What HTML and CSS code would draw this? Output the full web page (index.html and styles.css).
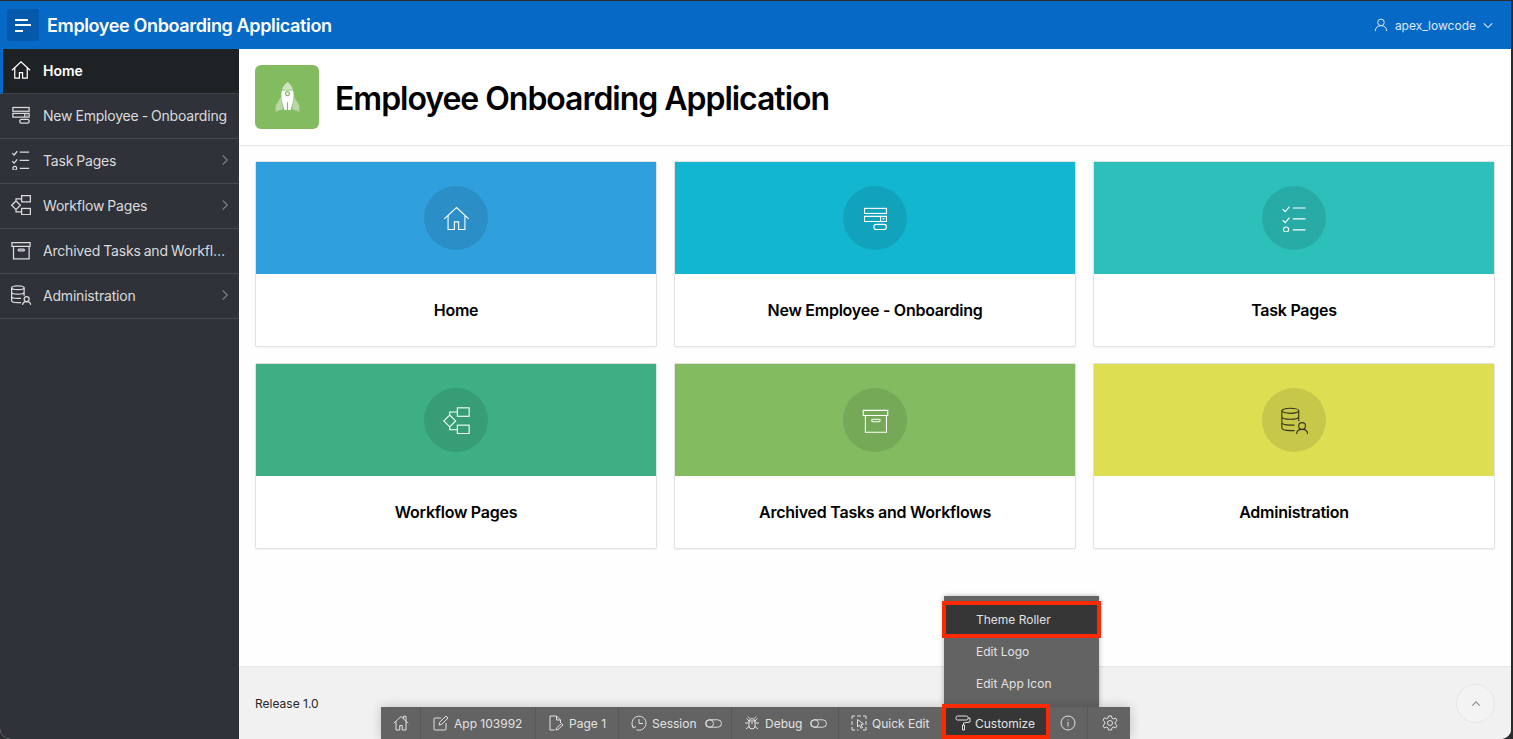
FILE: index.html
```html
<!DOCTYPE html>
<html lang="en">
<head>
    <meta charset="UTF-8">
    <meta name="viewport" content="width=device-width, initial-scale=1.0">
    <title>Employee Onboarding Application</title>
    <link rel="stylesheet" href="styles.css">
</head>
<body>
    <svg class="icon-defs" aria-hidden="true">
        <symbol id="i-home" viewBox="0 0 32 32">
            <path d="M1.500 16.500 16 3l14.500 13.500M6 12.500V29h7.500v-9h5v9H26V12.500"/>
        </symbol>
        <symbol id="i-home-chimney" viewBox="0 0 32 32">
            <path d="M1.500 16.500 16 3l14.500 13.500M6 12.500V30h7.500v-9h5v9H26V12.500M21 7.500V2.500h5V12"/>
        </symbol>
        <symbol id="i-form" viewBox="0 0 32 32">
            <rect x="3" y="4" width="26" height="6"/>
            <path d="M3 13.500h26v6H3zM22 13.500v6"/>
            <path class="solid" d="M23.800 15.700h3.400l-1.700 2z"/>
            <rect x="14" y="23" width="15" height="6" rx="3"/>
        </symbol>
        <symbol id="i-tasks" viewBox="0 0 32 32">
            <path d="M2 5l3 3 5-6M2 18l3 3 5-6M14 3.500h15M14 16.500h15M14 29.500h15"/>
            <circle cx="6" cy="29" r="3"/>
        </symbol>
        <symbol id="i-flow" viewBox="0 0 32 32">
            <path d="M1 16.500 8 9.500 15 16.500 8 23.500zM8 9.500V6h9M8 23.500V27h9"/>
            <rect x="17" y="1" width="14" height="10"/>
            <rect x="17" y="21.500" width="14" height="10"/>
        </symbol>
        <symbol id="i-archive" viewBox="0 0 32 32">
            <path d="M1.500 4h29v6h-29zM4 10v20h25V10"/>
            <rect x="11.500" y="14.500" width="10" height="3" rx="1.500"/>
        </symbol>
        <symbol id="i-data" viewBox="0 0 32 32">
            <ellipse cx="11" cy="4.500" rx="10" ry="3"/>
            <path d="M1 4.500V25c0 2 4 3 10 3h5M21 4.500V17M1 11.500c0 2 4 3 10 3s10-1 10-3M1 18.500c0 2 4 3 10 3h5"/>
            <circle cx="25" cy="22.500" r="4"/>
            <path d="M18.500 32c0-3.500 2.500-5.500 6.500-5.500s6.500 2 6.500 5.500"/>
        </symbol>
        <symbol id="i-chevron" viewBox="0 0 32 32">
            <path d="M10 4l12 12-12 12"/>
        </symbol>
        <symbol id="i-user" viewBox="0 0 32 32">
            <circle cx="16" cy="10" r="7.500"/>
            <path d="M3 30c0-8 5-12.500 13-12.500S29 22 29 30"/>
        </symbol>
        <symbol id="i-edit" viewBox="0 0 32 32">
            <path d="M26 16v12a2 2 0 0 1-2 2H4a2 2 0 0 1-2-2V8a2 2 0 0 1 2-2h12M12 20l1.500-6L26 2l4 4-12.500 12.500z"/>
        </symbol>
        <symbol id="i-page" viewBox="0 0 32 32">
            <path d="M13 30H4V2h13l8 8v6M17 2v8h8M16 30l1-4 10-9 3 3-10 9z"/>
        </symbol>
        <symbol id="i-session" viewBox="0 0 32 32">
            <path d="M5 25a14 14 0 1 1 6 4.500M16 8v9h8M2 21l3 5 5-3"/>
        </symbol>
        <symbol id="i-toggle" viewBox="0 0 32 16">
            <rect x="1" y="1" width="30" height="14" rx="7"/>
            <circle cx="9" cy="8" r="7"/>
        </symbol>
        <symbol id="i-bug" viewBox="0 0 32 32">
            <path d="M10 12h12v10a6 6 0 0 1-12 0zM11 12a5 5 0 0 1 10 0M16 14v4M10 16H2M22 16h8M10 23l-6 5M22 23l6 5M10 12 5 7M22 12l5-5M11 7 8 3M21 7l3-4"/>
        </symbol>
        <symbol id="i-quick" viewBox="0 0 32 32">
            <path d="M2 8V2h6M12 2h8M24 2h6v6M30 12v8M30 24v6h-6M2 12v8M2 24v6h6M12 30h3M13 9l12 9-5 1 3 6-3 1.500-3-6-4 3z"/>
        </symbol>
        <symbol id="i-roller" viewBox="0 0 32 32">
            <rect x="2" y="2" width="24" height="8" rx="3"/>
            <path d="M26 6h4v8l-13 2v4M15 20h4v10h-4z"/>
        </symbol>
        <symbol id="i-info" viewBox="0 0 32 32">
            <circle cx="16" cy="16" r="14"/>
            <path d="M16 14v9M16 9v2"/>
        </symbol>
        <symbol id="i-gear" viewBox="0 0 32 32">
            <circle cx="16" cy="16" r="5"/>
            <path d="M13 2h6l1 4.500 3 1.500 4-2 3 5-3.500 3v4l3.500 3-3 5-4-2-3 1.500-1 4.500h-6l-1-4.500-3-1.500-4 2-3-5 3.500-3v-4L2 10.500l3-5 4 2 3-1.500z"/>
        </symbol>
    </svg>

    <div class="window">
        <header class="topbar">
            <div class="topbar-left">
                <button class="menu-btn" aria-label="Main Navigation">
                    <span class="bar bar-long"></span>
                    <span class="bar bar-full"></span>
                    <span class="bar bar-short"></span>
                </button>
                <span class="app-name">Employee Onboarding Application</span>
            </div>
            <div class="user-menu">
                <svg class="icon icon-user"><use href="#i-user"/></svg>
                <span>apex_lowcode</span>
                <svg class="icon icon-caret" viewBox="0 0 12 8"><path d="M1 1.500l5 5 5-5"/></svg>
            </div>
        </header>

        <div class="body-row">
            <nav class="sidebar">
                <a class="nav-item is-current"><svg class="icon nav-icon"><use href="#i-home"/></svg><span class="nav-label">Home</span></a>
                <a class="nav-item"><svg class="icon nav-icon"><use href="#i-form"/></svg><span class="nav-label">New Employee - Onboarding</span></a>
                <a class="nav-item"><svg class="icon nav-icon"><use href="#i-tasks"/></svg><span class="nav-label">Task Pages</span><svg class="icon nav-arrow"><use href="#i-chevron"/></svg></a>
                <a class="nav-item"><svg class="icon nav-icon"><use href="#i-flow"/></svg><span class="nav-label">Workflow Pages</span><svg class="icon nav-arrow"><use href="#i-chevron"/></svg></a>
                <a class="nav-item"><svg class="icon nav-icon"><use href="#i-archive"/></svg><span class="nav-label">Archived Tasks and Workflows</span></a>
                <a class="nav-item"><svg class="icon nav-icon"><use href="#i-data"/></svg><span class="nav-label">Administration</span><svg class="icon nav-arrow"><use href="#i-chevron"/></svg></a>
            </nav>

            <main class="content">
                <section class="hero">
                    <div class="hero-icon">
                        <svg viewBox="0 0 32 42" width="25" height="33">
                            <path class="fin" d="M8 20 1 31v8l9-3zM24 20l7 11v8l-9-3z"/>
                            <path class="nose" d="M16 1c-3 2-6 6-7 10h14c-1-4-4-8-7-10z"/>
                            <path class="rocket-body" d="M9 12h14c1 3 1 6 .500 10-.500 5-2 10-3.500 15h-8c-1.500-5-3-10-3.500-15-.500-4-.500-7 .500-10z"/>
                            <circle class="port" cx="16" cy="16" r="2.500"/>
                            <path class="port" d="M16 27v10"/>
                        </svg>
                    </div>
                    <h1>Employee Onboarding Application</h1>
                </section>

                <section class="cards">
                    <a class="card">
                        <div class="card-top c-blue"><span class="card-badge"><svg class="icon"><use href="#i-home"/></svg></span></div>
                        <h3>Home</h3>
                    </a>
                    <a class="card">
                        <div class="card-top c-cyan"><span class="card-badge"><svg class="icon"><use href="#i-form"/></svg></span></div>
                        <h3>New Employee - Onboarding</h3>
                    </a>
                    <a class="card">
                        <div class="card-top c-teal"><span class="card-badge"><svg class="icon"><use href="#i-tasks"/></svg></span></div>
                        <h3>Task Pages</h3>
                    </a>
                    <a class="card">
                        <div class="card-top c-green"><span class="card-badge"><svg class="icon"><use href="#i-flow"/></svg></span></div>
                        <h3>Workflow Pages</h3>
                    </a>
                    <a class="card">
                        <div class="card-top c-lime"><span class="card-badge"><svg class="icon"><use href="#i-archive"/></svg></span></div>
                        <h3>Archived Tasks and Workflows</h3>
                    </a>
                    <a class="card">
                        <div class="card-top c-yellow"><span class="card-badge dark"><svg class="icon"><use href="#i-data"/></svg></span></div>
                        <h3>Administration</h3>
                    </a>
                </section>

                <footer class="footer">
                    <span>Release 1.0</span>
                    <button class="to-top" aria-label="Top"><svg class="icon" viewBox="0 0 12 8"><path d="M1.500 6.500 6 2l4.500 4.500"/></svg></button>
                </footer>
            </main>
        </div>

        <!-- developer toolbar floats over the footer -->
        <div class="dev-menu">
            <a class="dev-menu-item is-marked">Theme Roller</a>
            <a class="dev-menu-item">Edit Logo</a>
            <a class="dev-menu-item">Edit App Icon</a>
        </div>
        <div class="dev-bar">
            <a class="dev-item only-icon"><svg class="icon"><use href="#i-home-chimney"/></svg></a>
            <a class="dev-item w-app"><svg class="icon"><use href="#i-edit"/></svg>App 103992</a>
            <a class="dev-item w-page"><svg class="icon"><use href="#i-page"/></svg>Page 1</a>
            <a class="dev-item w-session"><svg class="icon"><use href="#i-session"/></svg>Session<svg class="icon toggle"><use href="#i-toggle"/></svg></a>
            <a class="dev-item w-debug"><svg class="icon"><use href="#i-bug"/></svg>Debug<svg class="icon toggle"><use href="#i-toggle"/></svg></a>
            <a class="dev-item w-quick"><svg class="icon"><use href="#i-quick"/></svg>Quick Edit</a>
            <a class="dev-item w-custom is-marked"><svg class="icon"><use href="#i-roller"/></svg>Customize</a>
            <a class="dev-item only-icon"><svg class="icon"><use href="#i-info"/></svg></a>
            <a class="dev-item only-icon"><svg class="icon"><use href="#i-gear"/></svg></a>
        </div>
    </div>
</body>
</html>
```

FILE: styles.css
```css
* {
    box-sizing: border-box;
}
html, body {
    height: 100%;
}
body {
    margin: 0;
    overflow: hidden;
    background: #2b2b2d;
    font-family: Inter, "Liberation Sans", sans-serif;
    color: #000;
}
.icon-defs {
    display: none;
}
.icon {
    display: block;
    fill: none;
    stroke: currentColor;
    stroke-width: 2;
    flex: none;
}
.solid {
    fill: currentColor;
    stroke: none;
}
.window {
    position: relative;
    width: 1511px;
    height: 738px;
    margin-top: 1px;
    display: flex;
    flex-direction: column;
    overflow: hidden;
    border-radius: 0 0 10px 10px;
    background: #fefefe;
}

/* top bar */
.topbar {
    height: 48px;
    flex: none;
    display: flex;
    justify-content: space-between;
    align-items: center;
    padding: 0 18px 0 7px;
    background: #0669c6;
    color: #fff;
}
.topbar-left {
    display: flex;
    align-items: center;
    gap: 8px;
}
.menu-btn {
    width: 32px;
    height: 32px;
    padding: 0 0 0 8px;
    border: none;
    border-radius: 2px;
    background: #0559ab;
    display: flex;
    flex-direction: column;
    justify-content: center;
    gap: 3.500px;
}
.bar {
    display: block;
    height: 2px;
    background: #fff;
}
.bar-long {
    width: 13px;
}
.bar-full {
    width: 16px;
}
.bar-short {
    width: 8px;
}
.app-name {
    font-size: 18px;
    font-weight: 600;
    letter-spacing: -.36px;
}
.user-menu {
    display: flex;
    align-items: center;
    font-size: 12px;
    color: #dfeafa;
}
.icon-user {
    width: 14px;
    height: 14px;
    margin-right: 7px;
    stroke-width: 2.200;
}
.icon-caret {
    width: 10px;
    height: 7px;
    margin-left: 7px;
    stroke-width: 1.300;
}

/* side navigation */
.body-row {
    flex: 1;
    display: flex;
    min-height: 0;
}
.sidebar {
    width: 239px;
    flex: none;
    background: #2f3339;
    color: #dadbdc;
}
.nav-item {
    height: 45px;
    display: flex;
    align-items: center;
    padding: 0 11px 2px 11px;
    border-bottom: 1px solid #464a4f;
    font-size: 14px;
    letter-spacing: -.2px;
    word-spacing: -.6px;
}
.nav-item.is-current {
    padding-left: 8px;
    border-left: 3px solid #0669c6;
    border-bottom-color: #3f4347;
    background: #1f2224;
    color: #fff;
    font-weight: 600;
    letter-spacing: 0;
}
.nav-icon {
    width: 20px;
    height: 20px;
    stroke-width: 2;
}
.nav-label {
    flex: 1;
    min-width: 0;
    margin-left: 12px;
    white-space: nowrap;
    overflow: hidden;
    text-overflow: ellipsis;
}
.nav-arrow {
    width: 12px;
    height: 12px;
    margin: 0 -3px 0 6px;
    color: #7d8084;
    stroke-width: 3;
}

/* main area */
.content {
    flex: 1;
    min-width: 0;
    display: flex;
    flex-direction: column;
}
.hero {
    height: 97px;
    flex: none;
    display: flex;
    align-items: center;
    gap: 16px;
    padding: 0 16px;
    background: #fff;
    border-bottom: 1px solid #e6e6e6;
}
.hero-icon {
    width: 64px;
    height: 64px;
    border-radius: 6px;
    background: #83bb61;
    display: flex;
    align-items: center;
    justify-content: center;
}
.fin {
    fill: #b9d8a6;
    stroke: #a3cb8b;
}
.nose {
    fill: #cfe5c2;
}
.rocket-body {
    fill: #fff;
}
.port {
    fill: none;
    stroke: #83bb61;
    stroke-width: 1.500;
}
h1 {
    margin: 4px 0 0;
    font-size: 32px;
    font-weight: 600;
    line-height: 40px;
    letter-spacing: -1.030px;
}
.cards {
    flex: 1;
    display: grid;
    grid-template-columns: repeat(3, 402px);
    grid-auto-rows: 186px;
    align-content: start;
    gap: 16px 17px;
    padding: 15px 0 0 16px;
}
.card {
    display: flex;
    flex-direction: column;
    background: #fff;
    border: 1px solid #e2e2e2;
    border-radius: 2px;
    box-shadow: 0 1px 2px rgba(0, 0, 0, .06);
}
.card-top {
    height: 112px;
    flex: none;
    display: flex;
    align-items: center;
    justify-content: center;
    color: #fff;
}
.card-badge {
    width: 64px;
    height: 64px;
    border-radius: 50%;
    background: rgba(0, 0, 0, .1);
    display: flex;
    align-items: center;
    justify-content: center;
}
.card-badge .icon {
    width: 27px;
    height: 27px;
    stroke-width: 1.300;
}
.card-badge.dark {
    color: #35351c;
}
.c-blue { background: #309fdd; }
.c-cyan { background: #13b6d1; }
.c-teal { background: #2dbfb9; }
.c-green { background: #3daf83; }
.c-lime { background: #83bb61; }
.c-yellow { background: #dede52; }
.card h3 {
    flex: 1;
    margin: 0;
    display: flex;
    align-items: center;
    justify-content: center;
    font-size: 16px;
    font-weight: 600;
    letter-spacing: -.25px;
}
.footer {
    height: 73px;
    flex: none;
    display: flex;
    justify-content: space-between;
    align-items: center;
    padding: 0 16px;
    background: #f1f1f1;
    border-top: 1px solid #e6e6e6;
    font-size: 12px;
    color: #262626;
}
.to-top {
    width: 39px;
    height: 39px;
    border: 1px solid #e6e6e6;
    border-radius: 50%;
    background: #f3f3f3;
    color: #8b8b8b;
    padding: 0;
    display: flex;
    align-items: center;
    justify-content: center;
}
.to-top .icon {
    width: 10px;
    height: 7px;
    stroke-width: 1.300;
}

/* developer toolbar */
.dev-bar {
    position: absolute;
    left: 381px;
    bottom: 0;
    height: 32px;
    display: flex;
    background: #636363;
    color: #e2e2e2;
    font-size: 12px;
    box-shadow: 0 0 12px rgba(0, 0, 0, .2);
}
.dev-item {
    display: flex;
    align-items: center;
    gap: 5px;
    padding-left: 12px;
    border-right: 1px solid #585858;
    white-space: nowrap;
}
.dev-item .icon {
    width: 16px;
    height: 16px;
    stroke-width: 2;
}
.dev-item .toggle {
    width: 17px;
    height: 9px;
    margin-left: 3px;
    stroke-width: 1.800;
}
.only-icon {
    width: 40px;
}
.w-app { width: 115px; }
.w-page { width: 83px; }
.w-session { width: 113px; }
.w-debug { width: 107px; }
.w-quick { width: 105px; }
.dev-item:last-child {
    width: 42px;
    padding-left: 14px;
    border-right: none;
}
.dev-menu {
    position: absolute;
    left: 944px;
    bottom: 32px;
    width: 155px;
    padding: 8px 0 7px;
    background: #636363;
    color: #e2e2e2;
    font-size: 12px;
    box-shadow: 0 0 5px rgba(0, 0, 0, .3);
}
.dev-menu-item {
    display: block;
    height: 32px;
    line-height: 32px;
    padding-left: 32px;
}

/* red annotation boxes from the screenshot */
.is-marked {
    position: relative;
    z-index: 1;
    background: #363636;
    border: 4px solid #fb2a03;
}
.dev-menu-item.is-marked {
    height: 37px;
    margin: -3px -2px -2px;
    padding-left: 30px;
    line-height: 29px;
}
.dev-item.is-marked {
    width: 108px;
    height: 35px;
    margin: -3px -2px 0;
    padding: 3px 0 0 9px;
    gap: 4px;
}
```
